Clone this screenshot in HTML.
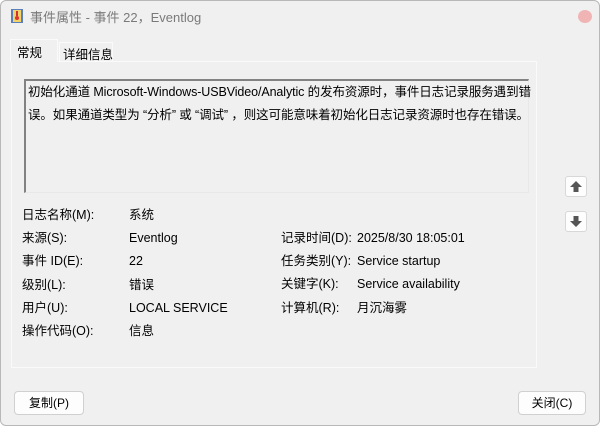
<!DOCTYPE html>
<html><head><meta charset="utf-8"><style>
*{margin:0;padding:0;box-sizing:border-box}
body{width:600px;height:426px;background:#fff;font-family:"Liberation Sans","Noto Sans CJK SC",sans-serif;font-size:12px;color:#000;overflow:hidden;position:relative}
.win{position:absolute;left:0;top:0;width:600px;height:426px;background:#f0f0f0;border:1px solid #b8b8b8;border-radius:6px}
.abs{position:absolute;white-space:nowrap}
.panel{position:absolute;left:10px;top:60px;width:526px;height:307px;border:1px solid #fafafa;background:#f0f0f0}
.tb{position:absolute;left:23px;top:78px;width:505px;height:114px;border:1px solid #e8e8e8;border-left:2px solid #828282;border-top:2px solid #828282;padding:0 2px;font-size:12.5px;line-height:23px;color:#000;white-space:nowrap;letter-spacing:-0.1px}
.btn{position:absolute;background:#fdfdfd;border:1px solid #d0d0d0;border-radius:4px;text-align:center;line-height:22px;font-size:12px}
.ab{position:absolute;width:22px;height:21px;background:#fdfdfd;border:1px solid #d8d8d8;border-radius:3px}
</style></head><body>
<div class="win">
<svg class="abs" style="left:9px;top:7px" width="14" height="16"><rect x="1" y="1" width="12" height="14" fill="#5b7fb8"/><rect x="3" y="2" width="8" height="12" fill="#f4d26a"/><circle cx="7" cy="10" r="2" fill="#d33"/><rect x="6" y="3" width="2" height="5" fill="#c33"/></svg>
<div class="abs" style="left:29px;top:6px;font-size:13px;color:#7a7a7a">事件属性 - 事件 22，Eventlog</div>
<div class="abs" style="left:577px;top:9px;width:14px;height:13px;border-radius:50%;background:#f0b4b4"></div>
<div class="panel"></div>
<div class="abs" style="left:9px;top:38px;width:48px;height:23px;background:#f0f0f0;border:1px solid #fafafa;border-bottom:none"></div>
<div class="abs" style="left:16px;top:41px;font-size:12.5px">常规</div>
<div class="abs" style="left:58px;top:41px;width:54px;height:19px;border:1px solid #fafafa;border-bottom:none"></div>
<div class="abs" style="left:62px;top:43px;font-size:12.5px">详细信息</div>
<div class="tb">初始化通道 Microsoft-Windows-USBVideo/Analytic 的发布资源时，事件日志记录服务遇到错<br>误。如果通道类型为 “分析” 或 “调试” ，则这可能意味着初始化日志记录资源时也存在错误。</div>
<div class="ab" style="left:564px;top:175px"><svg width="20" height="19"><path d="M10 4 L16 10 H12.5 V15 H7.5 V10 H4 Z" fill="#555"/></svg></div>
<div class="ab" style="left:564px;top:210px"><svg width="20" height="19"><path d="M10 15 L16 9 H12.5 V4 H7.5 V9 H4 Z" fill="#555"/></svg></div>
<div class="abs" style="left:21px;top:203px;font-size:12.5px;line-height:23.2px">日志名称(M):<br>来源(S):<br>事件 ID(E):<br>级别(L):<br>用户(U):<br>操作代码(O):</div>
<div class="abs" style="left:128px;top:203px;font-size:12.5px;line-height:23.2px">系统<br>Eventlog<br>22<br>错误<br>LOCAL SERVICE<br>信息</div>
<div class="abs" style="left:280px;top:226px;font-size:12.5px;line-height:23.2px">记录时间(D):<br>任务类别(Y):<br>关键字(K):<br>计算机(R):</div>
<div class="abs" style="left:356px;top:226px;font-size:12.5px;line-height:23.2px">2025/8/30 18:05:01<br>Service startup<br>Service availability<br>月沉海雾</div>
<div class="btn" style="left:13px;top:390px;width:70px;height:24px">复制(P)</div>
<div class="btn" style="left:517px;top:390px;width:68px;height:24px">关闭(C)</div>
</div>
</body></html>
